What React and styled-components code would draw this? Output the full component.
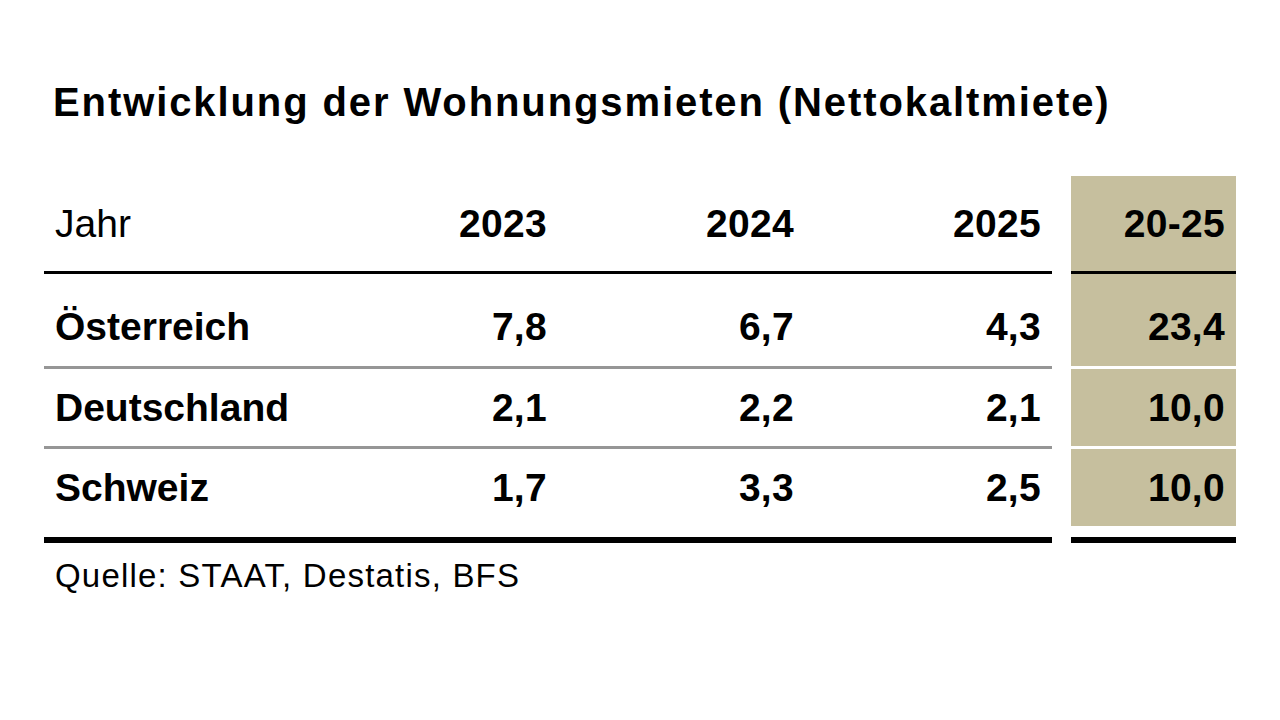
import React from 'react';
import styled, { createGlobalStyle } from 'styled-components';

const GlobalStyle = createGlobalStyle`
  html, body {
    margin: 0;
    padding: 0;
    background: #ffffff;
  }
  body {
    font-family: "Liberation Sans", Arial, sans-serif;
    color: #000000;
  }
`;

const Page = styled.div`
  width: 1280px;
  height: 720px;
  box-sizing: border-box;
  padding: 82px 0 0 44px;
  display: flex;
  flex-direction: column;
`;

const Title = styled.h1`
  margin: 0 0 54px 9px;
  font-size: 40px;
  line-height: 1;
  font-weight: 700;
  letter-spacing: 1.9px;
`;

const Table = styled.div`
  display: flex;
  flex-direction: column;
  width: 1192px;
`;

const Row = styled.div`
  display: grid;
  grid-template-columns: 267px 247px 247px 247px 19px 165px;
  height: ${p => p.$height}px;
`;

const lineStyle = {
  solid: '3px solid #000000',
  dotted: '3px solid #969696',
  white: '3px solid #ffffff',
  none: '0',
};

const Cell = styled.div`
  display: flex;
  align-items: center;
  justify-content: ${p => (p.$left ? 'flex-start' : 'flex-end')};
  padding: ${p => p.$top || 0}px 11px 0 11px;
  font-size: 39px;
  line-height: 1;
  letter-spacing: ${p => (p.$left ? 0 : 0.3)}px;
  font-weight: ${p => (p.$regular ? 400 : 700)};
  background: ${p => (p.$hl ? '#c6bf9e' : 'transparent')};
  border-bottom: ${p => lineStyle[p.$line || 'none']};
  box-sizing: content-box;
  height: calc(100% - ${p => (p.$line && p.$line !== 'none' ? 3 : 0)}px - ${p => p.$top || 0}px);
`;

const Spacer = styled.div``;

const BottomRule = styled.div`
  display: grid;
  grid-template-columns: 1008px 19px 165px;
  margin-top: 11px;
`;

const Bar = styled.div`
  height: 6px;
  background: ${p => (p.$on ? '#000000' : 'transparent')};
`;

const Source = styled.div`
  margin: 16px 0 0 11px;
  font-size: 33px;
  line-height: 1;
  letter-spacing: 1.2px;
`;

const rows = [
  { name: 'Österreich', vals: ['7,8', '6,7', '4,3'], total: '23,4', height: 95, top: 12, line: 'dotted', hlLine: 'white' },
  { name: 'Deutschland', vals: ['2,1', '2,2', '2,1'], total: '10,0', height: 80, top: 0, line: 'dotted', hlLine: 'white' },
  { name: 'Schweiz', vals: ['1,7', '3,3', '2,5'], total: '10,0', height: 77, top: 0, line: 'none', hlLine: 'none' },
];

export default function App() {
  return (
    <Page>
      <GlobalStyle />
      <Title>Entwicklung der Wohnungsmieten (Nettokaltmiete)</Title>
      <Table>
        <Row $height={98}>
          <Cell $left $regular $line="solid">Jahr</Cell>
          <Cell $line="solid">2023</Cell>
          <Cell $line="solid">2024</Cell>
          <Cell $line="solid">2025</Cell>
          <Spacer />
          <Cell $hl $line="solid">20-25</Cell>
        </Row>
        {rows.map(r => (
          <Row key={r.name} $height={r.height}>
            <Cell $left $line={r.line} $top={r.top}>{r.name}</Cell>
            {r.vals.map((v, i) => (
              <Cell key={i} $line={r.line} $top={r.top}>{v}</Cell>
            ))}
            <Spacer />
            <Cell $hl $line={r.hlLine} $top={r.top}>{r.total}</Cell>
          </Row>
        ))}
        <BottomRule>
          <Bar $on />
          <Bar />
          <Bar $on />
        </BottomRule>
      </Table>
      <Source>Quelle: STAAT, Destatis, BFS</Source>
    </Page>
  );
}
